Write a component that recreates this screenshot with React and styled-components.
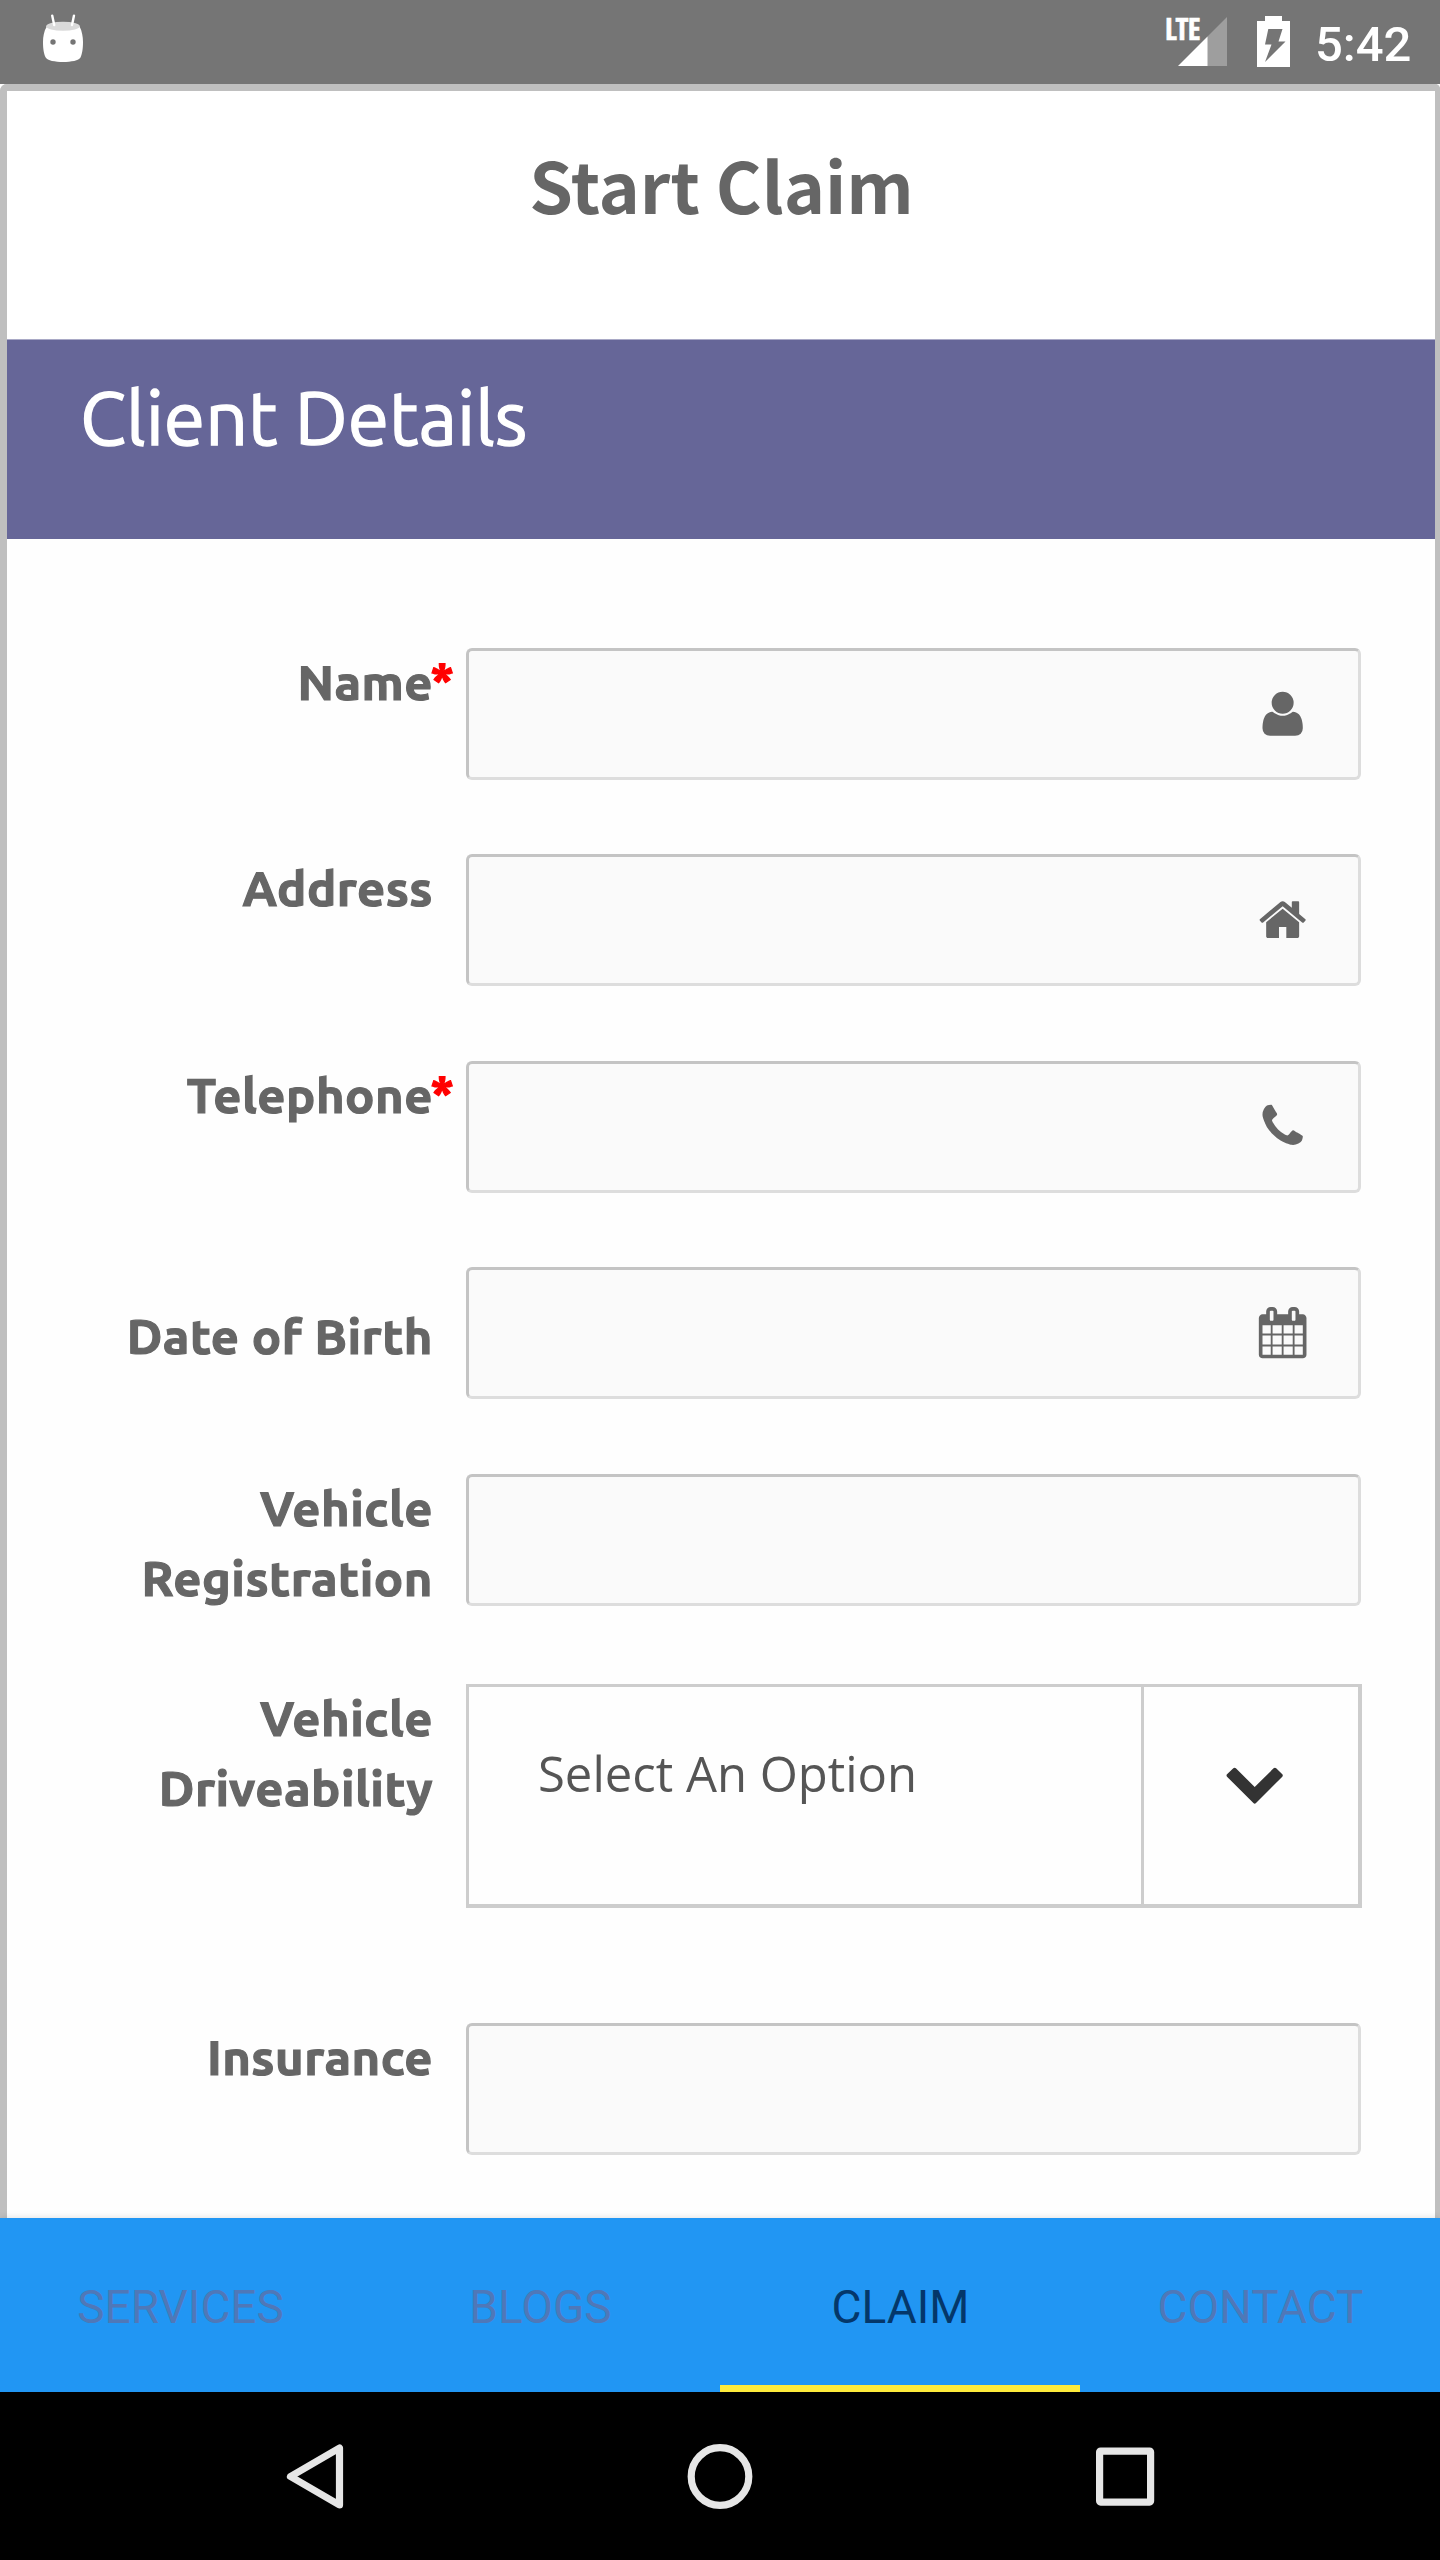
import React from "react";
import styled, { createGlobalStyle } from "styled-components";

const GlobalStyle = createGlobalStyle`
  *, *::before, *::after { box-sizing: border-box; }
  body { margin: 0; background: #fff; }
`;

const labelFont = '"Ubuntu", "Noto Sans", sans-serif';
const uiFont = '"Roboto", sans-serif';

const Screen = styled.div`
  display: flex;
  flex-direction: column;
  width: 1440px;
  height: 2560px;
  overflow: hidden;
  background: #fefefe;
`;

const StatusBar = styled.header`
  display: flex;
  flex: none;
  align-items: flex-start;
  height: 84px;
  padding: 14px 28px 0 42px;
  background: #757575;
  color: #fff;
`;

const StatusIcons = styled.div`
  display: flex;
  align-items: flex-start;
  margin-left: auto;
`;

const Network = styled.div`
  position: relative;
  width: 61px;
  height: 54px;
  margin-right: 30px;
`;

const NetworkType = styled.span`
  position: absolute;
  left: -1px;
  top: 3px;
  font: 700 30px/24px "Open Sans Condensed", "Roboto", sans-serif;
  letter-spacing: -0.6px;
  -webkit-text-stroke: 0.6px #fff;
`;

const Clock = styled.time`
  width: 97px;
  margin: 2px 0 0 25px;
  font: 500 49px/57px ${uiFont};
`;

const Frame = styled.main`
  flex: 1;
  min-height: 0;
  overflow: hidden;
  border: solid #bfbfbf;
  border-width: 7px 5px 0 7px;
  border-radius: 7px 5px 0 0;
`;

const Title = styled.h1`
  height: 248px;
  margin: 0;
  padding: 42px 0 0 1px;
  background: #fff;
  color: #666;
  font: 700 70px/101px "Noto Sans CJK SC", sans-serif;
  text-align: center;
`;

const SectionHeader = styled.h2`
  height: 200px;
  margin: 0;
  padding: 35px 73px 0;
  border-top: 1px solid #a9a9c6;
  background: #666698;
  color: #fff;
  font: 400 75px/84px ${labelFont};
  -webkit-text-stroke: 1.4px #fff;
`;

const Form = styled.form`
  display: flex;
  flex-direction: column;
  padding: 109px 73px 0 73px;
`;

const FormRow = styled.div`
  display: grid;
  grid-template-columns: 353px 1fr;
  column-gap: 33px;
  margin-bottom: ${(p) => p.$gap}px;
`;

const Label = styled.label`
  position: relative;
  margin-top: ${(p) => (p.$low ? 34 : -1)}px;
  height: 70px;
  color: #666;
  font: 700 49px/70px ${labelFont};
  letter-spacing: 0.5px;
  text-align: right;
  -webkit-text-stroke: 1.2px currentColor;
`;

const Required = styled.span`
  position: absolute;
  left: 100%;
  top: -3px;
  margin-left: -3px;
  color: #f00;
`;

const Field = styled.div`
  display: flex;
  align-items: center;
  justify-content: flex-end;
  width: 895px;
  height: 132px;
  padding-right: 49.5px;
  border: 3px solid;
  border-color: #c4c4c4 #ddd #ddd #c4c4c4;
  border-radius: 6px;
  background: #fafafa;
  color: #666;
`;

const Select = styled.div`
  display: flex;
  width: 896px;
  height: 224px;
  border: solid #cdcdcd;
  border-width: 3px 4px 4px 3px;
  background: #fefefe;
`;

const SelectValue = styled.span`
  flex: 1;
  padding: 53px 0 0 69px;
  color: #555;
  font: 400 49px/67px "Open Sans", "Noto Sans", sans-serif;
`;

const SelectArrow = styled.span`
  width: 217px;
  padding: 80px 0 0 82px;
  border-left: 3px solid #cdcdcd;
  color: #333;
`;

const Tabs = styled.nav`
  position: relative;
  display: grid;
  flex: none;
  grid-template-columns: repeat(4, 1fr);
  height: 174px;
  background: #2196f3;
  box-shadow: 0 -1px 6px rgba(0, 0, 0, 0.1);
`;

const Tab = styled.a`
  display: flex;
  align-items: center;
  justify-content: center;
  padding: 3px 0 0 1px;
  color: ${(p) => (p.$active ? "#04376a" : "#4f78b8")};
  box-shadow: ${(p) => (p.$active ? "inset 0 -7px #ffeb3b" : "none")};
  font: 400 46px/54px ${uiFont};
`;

const SystemNav = styled.footer`
  display: flex;
  flex: none;
  align-items: center;
  justify-content: center;
  gap: 339px;
  height: 168px;
  background: #000;
`;

const Svg = styled.svg`
  display: block;
  flex: none;
`;

const Robot = () => (
  <Svg width="42" height="50" viewBox="42 14 42 50">
    <path d="M46.500 27C51 21 75.500 21 79.800 27C82 31 83 37 83 42C83 49 82 54.500 80.500 57.500C77.500 63.500 48.800 63.500 45.700 57.500C44 54.500 43 49 43 42C43 37 44 31 46.500 27Z" fill="#fff" />
    <ellipse cx="63" cy="26.300" rx="16.800" ry="4.500" fill="#dadada" />
    <path d="M52.200 15.600L54.200 25M74 15.600L72 25" stroke="#fff" strokeWidth="2.400" strokeLinecap="round" />
    <circle cx="53" cy="42" r="2.700" fill="#757575" />
    <circle cx="73" cy="42" r="2.700" fill="#757575" />
  </Svg>
);

const Signal = () => (
  <Svg width="61" height="54" viewBox="1166 14 61 54">
    <path d="M1227 17V66H1207V37Z" fill="#9e9e9e" />
    <path d="M1207.500 36.500V66H1178Z" fill="#fff" />
  </Svg>
);

const Battery = () => (
  <Svg width="33" height="54" viewBox="1257 14 33 54">
    <path d="M1265 16H1282V21H1290V67H1257V21H1265Z" fill="#fff" />
    <path d="M1268.300 29H1282.500L1278.500 41.500H1285.500L1265 62L1271.500 44.500H1265Z" fill="#757575" />
  </Svg>
);

const fieldIcons = {
  user: "M1600 1405q0 120-73 189.500t-194 69.500h-874q-121 0-194-69.500t-73-189.500q0-53 3.500-103.500t14-109 26.500-108.500 43-97.500 62-81 85.500-53.500 111.500-20q9 0 42 21.500t74.500 48 108 48 133.500 21.500 133.500-21.500 108-48 74.500-48 42-21.500q61 0 111.500 20t85.500 53.500 62 81 43 97.500 26.500 108.500 14 109 3.500 103.500zM1280 512q0 159-112.500 271.500t-271.500 112.500-271.500-112.500-112.500-271.500 112.500-271.500 271.500-112.500 271.500 112.500 112.500 271.500z",
  home: "M1472 992v480q0 26-19 45t-45 19h-384v-384h-256v384h-384q-26 0-45-19t-19-45v-480q0-1 .5-3t.5-3l575-474 575 474q1 2 1 6zm223-69l-62 74q-8 9-21 11h-3q-13 0-21-7l-692-577-692 577q-12 8-24 7-13-2-21-11l-62-74q-8-10-7-23.500t11-21.500l719-599q32-26 76-26t76 26l244 204v-195q0-14 9-23t23-9h192q14 0 23 9t9 23v408l219 182q10 8 11 21.500t-7 23.500z",
  phone: "M1600 1240q0 27-10 70.500t-21 68.500q-21 50-122 106-94 51-186 51-27 0-53-3.500t-57.500-12.500-47-14.500-55.500-20.500-49-18q-98-35-175-83-127-79-264-216t-216-264q-48-77-83-175-3-9-18-49t-20.500-55.500-14.500-47-12.500-57.500-3.500-53q0-92 51-186 56-101 106-122 25-11 68.500-21t70.500-10q14 0 21 3 18 6 53 76 11 19 30 54t35 63.500 31 53.500q3 4 17.500 25t21.500 35.500 7 28.500q0 20-28.500 50t-62 55-62 53-28.500 46q0 9 5 22.500t8.500 20.500 14 24 11.500 19q76 137 174 235t235 174q2 1 19 11.500t24 14 20.500 8.500 22.500 5q18 0 46-28.500t53-62 55-62 50-28.500q14 0 28.500 7t35.500 21.500 25 17.500q25 15 53.500 31t63.500 35 54 30q70 35 76 53 3 7 3 21z",
  calendar: "M192 1664h288v-288h-288v288zm352 0h320v-288h-320v288zm-352-352h288v-320h-288v320zm352 0h320v-320h-320v320zm-352-384h288v-288h-288v288zm736 736h320v-288h-320v288zm-384-736h320v-288h-320v288zm768 736h288v-288h-288v288zm-384-352h320v-320h-320v320zm-352-864v-288q0-13-9.500-22.500t-22.500-9.500h-64q-13 0-22.500 9.500t-9.500 22.500v288q0 13 9.500 22.500t22.500 9.500h64q13 0 22.500-9.500t9.500-22.500zm736 864h288v-320h-288v320zm-384-384h320v-288h-320v288zm384 0h288v-288h-288v288zm32-480v-288q0-13-9.500-22.500t-22.500-9.500h-64q-13 0-22.500 9.500t-9.500 22.500v288q0 13 9.500 22.500t22.500 9.500h64q13 0 22.500-9.500t9.500-22.500zm384-64v1280q0 52-38 90t-90 38h-1408q-52 0-90-38t-38-90v-1280q0-52 38-90t90-38h128v-96q0-66 47-113t113-47h64q66 0 113 47t47 113v96h384v-96q0-66 47-113t113-47h64q66 0 113 47t47 113v96h128q52 0 90 38t38 90z",
};

const FieldIcon = ({ name }) => (
  <Svg width="51.300" height="51.300" viewBox="0 0 1792 1792" fill="currentColor">
    <path d={fieldIcons[name]} />
  </Svg>
);

const Chevron = () => (
  <Svg width="57" height="37" viewBox="0 0 57 37" fill="currentColor">
    <path d="M9.900 1.300Q8.600 .200 7.300 1.300L1 7.300Q0 8.500 1 9.700L27.400 36.100Q28.700 37.300 30 36.100L56.300 9.700Q57.300 8.500 56.300 7.300L50.200 1.300Q48.900 .200 47.600 1.300L28.700 20Z" />
  </Svg>
);

const NavIcon = ({ children }) => (
  <Svg width="66" height="66" viewBox="0 -0.500 66 66" fill="none" stroke="#e6e6e6" strokeWidth="7.200" strokeLinejoin="round">
    {children}
  </Svg>
);

const rows = [
  { label: ["Name"], required: true, icon: "user", gap: 74 },
  { label: ["Address"], icon: "home", gap: 75 },
  { label: ["Telephone"], required: true, icon: "phone", gap: 74 },
  { label: ["Date of Birth"], icon: "calendar", low: true, gap: 75 },
  { label: ["Vehicle", "Registration"], gap: 78 },
  { label: ["Vehicle", "Driveability"], select: "Select An Option", gap: 115 },
  { label: ["Insurance"], gap: 0 },
];

const tabs = ["SERVICES", "BLOGS", "CLAIM", "CONTACT"];

export default function App() {
  return (
    <Screen>
      <GlobalStyle />
      <StatusBar>
        <Robot />
        <StatusIcons>
          <Network>
            <Signal />
            <NetworkType>LTE</NetworkType>
          </Network>
          <Battery />
          <Clock>5:42</Clock>
        </StatusIcons>
      </StatusBar>

      <Frame>
        <Title>Start Claim</Title>
        <SectionHeader>Client Details</SectionHeader>
        <Form>
          {rows.map((row) => (
            <FormRow key={row.label.join(" ")} $gap={row.gap}>
              <Label $low={row.low}>
                {row.label.map((line) => (
                  <div key={line}>{line}</div>
                ))}
                {row.required && <Required>*</Required>}
              </Label>
              {row.select ? (
                <Select>
                  <SelectValue>{row.select}</SelectValue>
                  <SelectArrow>
                    <Chevron />
                  </SelectArrow>
                </Select>
              ) : (
                <Field>{row.icon && <FieldIcon name={row.icon} />}</Field>
              )}
            </FormRow>
          ))}
        </Form>
      </Frame>

      <Tabs>
        {tabs.map((tab) => (
          <Tab key={tab} $active={tab === "CLAIM"}>
            {tab}
          </Tab>
        ))}
      </Tabs>

      <SystemNav>
        <NavIcon>
          <path d="M57.500 4.500V61.500L8.500 33Z" />
        </NavIcon>
        <NavIcon>
          <circle cx="33" cy="33" r="28.800" />
        </NavIcon>
        <NavIcon>
          <rect x="7.600" y="7.600" width="51" height="51" rx="1" />
        </NavIcon>
      </SystemNav>
    </Screen>
  );
}
